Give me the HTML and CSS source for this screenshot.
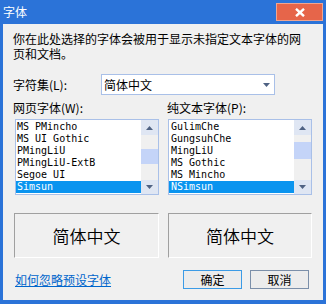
FILE: index.html
```html
<!DOCTYPE html>
<html lang="zh-CN">
<head>
<meta charset="utf-8">
<title>字体</title>
<link rel="stylesheet" href="styles.css">
</head>
<body>
<div class="window">
  <div class="titlebar">
    <span class="title">字体</span>
    <div class="close"><svg width="10" height="9" viewBox="0 0 10 9"><path d="M1 0.8 L9 8.2 M9 0.8 L1 8.2" stroke="#fff" stroke-width="2.4" fill="none"/></svg></div>
  </div>
  <div class="content">
    <p class="desc">你在此处选择的字体会被用于显示未指定文本字体的网页和文档。</p>
    <div class="charset">
      <span class="charset-label">字符集(L):</span>
      <div class="select"><span>简体中文</span><svg width="7" height="4" viewBox="0 0 7 4"><path d="M0 0 L7 0 L3.5 4 Z" fill="#4f6283"/></svg></div>
    </div>
    <div class="columns">
      <div class="col">
        <div class="col-label">网页字体(W):</div>
        <div class="listbox">
          <ul class="items">
            <li class="item">MS PMincho</li>
            <li class="item">MS UI Gothic</li>
            <li class="item">PMingLiU</li>
            <li class="item">PMingLiU-ExtB</li>
            <li class="item">Segoe UI</li>
            <li class="item selected">Simsun</li>
          </ul>
          <div class="scrollbar">
            <div class="sb-btn"><svg width="7" height="4" viewBox="0 0 7 4"><path d="M0 4 L3.5 0 L7 4 Z" fill="#4f6283"/></svg></div>
            <div class="sb-track"><div class="sb-thumb" style="margin-top:14px;height:15px"></div></div>
            <div class="sb-btn"><svg width="7" height="4" viewBox="0 0 7 4"><path d="M0 0 L7 0 L3.5 4 Z" fill="#4f6283"/></svg></div>
          </div>
        </div>
        <div class="sample">简体中文</div>
      </div>
      <div class="col col-right">
        <div class="col-label">纯文本字体(P):</div>
        <div class="listbox">
          <ul class="items">
            <li class="item">GulimChe</li>
            <li class="item">GungsuhChe</li>
            <li class="item">MingLiU</li>
            <li class="item">MS Gothic</li>
            <li class="item">MS Mincho</li>
            <li class="item selected">NSimsun</li>
          </ul>
          <div class="scrollbar">
            <div class="sb-btn"><svg width="7" height="4" viewBox="0 0 7 4"><path d="M0 4 L3.5 0 L7 4 Z" fill="#4f6283"/></svg></div>
            <div class="sb-track"><div class="sb-thumb" style="margin-top:7px;height:17px"></div></div>
            <div class="sb-btn"><svg width="7" height="4" viewBox="0 0 7 4"><path d="M0 0 L7 0 L3.5 4 Z" fill="#4f6283"/></svg></div>
          </div>
        </div>
        <div class="sample">简体中文</div>
      </div>
    </div>
    <div class="footer">
      <a class="link" href="#">如何忽略预设字体</a>
      <div class="buttons">
        <button class="btn btn-default">确定</button>
        <button class="btn">取消</button>
      </div>
    </div>
  </div>
</div>
</body>
</html>
```

FILE: styles.css
```css
body {
  margin: 0;
}

.window {
  width: 326px;
  height: 304px;
  box-sizing: border-box;
  background: #2b73d8;
  padding: 0 3px 4px 3px;
  display: flex;
  flex-direction: column;
  font-family: "Noto Sans CJK SC", sans-serif;
  font-size: 12px;
  color: #000;
}

.titlebar {
  height: 24px;
  flex: none;
  display: flex;
  align-items: flex-start;
  justify-content: space-between;
}

.title {
  color: #fff;
  line-height: 24px;
}

.close {
  margin-top: 3px;
  width: 47px;
  height: 18px;
  box-sizing: border-box;
  background: #e6654a;
  border: 1px solid #f0a58f;
  display: flex;
  align-items: center;
  justify-content: center;
}

.content {
  flex: 1;
  background: #f0f0f0;
  padding: 7px 14px 0 10px;
}

.desc {
  margin: 0;
  width: 290px;
  line-height: 15px;
}

.charset {
  display: flex;
  align-items: center;
  margin-top: 13px;
}

.charset-label {
  width: 88px;
  line-height: 15px;
}

.select {
  width: 174px;
  height: 21px;
  box-sizing: border-box;
  border: 1px solid #a9c0e8;
  background: #fff;
  display: flex;
  align-items: center;
  justify-content: space-between;
  padding: 0 4px 0 2px;
}

.columns {
  display: grid;
  grid-template-columns: 154px 150px;
  margin-top: 5px;
}

.col-label {
  line-height: 15px;
}

.listbox {
  margin: 4px 0 0 2px;
  width: 144px;
  height: 76px;
  box-sizing: border-box;
  border: 1px solid #a9c0e8;
  background: #fff;
  display: flex;
}

.col-right .listbox {
  margin-left: 1px;
}

.items {
  list-style: none;
  margin: 0;
  padding: 1px 0;
  flex: 1;
  font-family: "DejaVu Sans Mono", monospace;
  font-size: 10px;
}

.item {
  height: 12px;
  line-height: 12px;
  padding-left: 1px;
  white-space: nowrap;
}

.col-right .item {
  padding-left: 2px;
}

.item.selected {
  background: #0a94ef;
  color: #fff;
}

.scrollbar {
  width: 17px;
  flex: none;
  display: flex;
  flex-direction: column;
  background: #f0f0f0;
}

.sb-btn {
  height: 15px;
  background: #dfe6f3;
  display: flex;
  align-items: center;
  justify-content: center;
}

.sb-btn:last-child {
  height: 14px;
}

.sb-track {
  flex: 1;
}

.sb-thumb {
  background: #c4d4f8;
}

.sample {
  margin: 18px 0 0 1px;
  width: 145px;
  height: 45px;
  box-sizing: border-box;
  border: 1px solid;
  border-color: #a0a0a0 #fff #fff #a0a0a0;
  display: flex;
  align-items: center;
  justify-content: center;
  font-size: 17px;
  font-weight: 350;
  color: #000;
}

.col-right .sample {
  width: 144px;
}

.footer {
  display: flex;
  align-items: center;
  margin-top: 12px;
}

.link {
  margin-left: 2px;
  color: #0066cc;
  text-decoration: underline;
  line-height: 15px;
}

.buttons {
  margin-left: auto;
  display: flex;
  gap: 8px;
}

.btn {
  width: 59px;
  height: 19px;
  box-sizing: border-box;
  border: 1px solid #7b8fa9;
  background: #ececec;
  font-family: "Noto Sans CJK SC", sans-serif;
  font-size: 12px;
  line-height: 15px;
  padding: 0;
  color: #000;
}

.btn-default {
  border-color: #3c9be6;
}
```
